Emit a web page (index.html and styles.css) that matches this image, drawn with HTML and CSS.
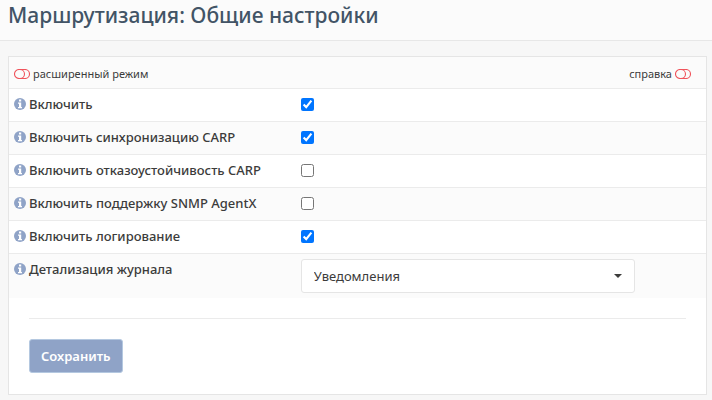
FILE: index.html
```html
<!DOCTYPE html>
<html lang="ru">
<head>
<meta charset="utf-8">
<meta name="viewport" content="width=device-width, initial-scale=1">
<title>Маршрутизация: Общие настройки</title>
<link rel="stylesheet" href="styles.css">
</head>
<body>
<svg class="defs" aria-hidden="true">
  <symbol id="info" viewBox="0 0 12 12">
    <circle cx="6" cy="6" r="6" fill="#8fa3c7"/>
    <path fill="#fff" d="M5 1.5h2.2v2H5zM4 4.5h3.2V9H8v1.3H4V9h1V5.8H4z"/>
  </symbol>
  <symbol id="toggle" viewBox="0 0 16 10">
    <rect x=".5" y=".5" width="15" height="9" rx="4.5" fill="none" stroke="#f0545c" stroke-width="1.1"/>
    <path d="M5 .5h1a4.5 4.5 0 0 1 0 9H5" fill="none" stroke="#f0545c" stroke-width="1.1"/>
  </symbol>
</svg>
<header class="page-head"><h1>Маршрутизация: Общие настройки</h1></header>
<main class="content">
  <form class="panel">
    <table class="settings">
      <thead>
        <tr>
          <td><a class="mode" href="#"><svg class="toggle"><use href="#toggle"/></svg>расширенный режим</a></td>
          <td class="help"><a class="mode" href="#">справка<svg class="toggle"><use href="#toggle"/></svg></a></td>
        </tr>
      </thead>
      <tbody>
        <tr>
          <th scope="row"><label class="name" for="enabled"><svg class="info"><use href="#info"/></svg>Включить</label></th>
          <td><input type="checkbox" id="enabled" checked></td>
        </tr>
        <tr>
          <th scope="row"><label class="name" for="carp"><svg class="info"><use href="#info"/></svg>Включить синхронизацию CARP</label></th>
          <td><input type="checkbox" id="carp" checked></td>
        </tr>
        <tr>
          <th scope="row"><label class="name" for="failover"><svg class="info"><use href="#info"/></svg>Включить отказоустойчивость CARP</label></th>
          <td><input type="checkbox" id="failover"></td>
        </tr>
        <tr>
          <th scope="row"><label class="name" for="snmp"><svg class="info"><use href="#info"/></svg>Включить поддержку SNMP AgentX</label></th>
          <td><input type="checkbox" id="snmp"></td>
        </tr>
        <tr>
          <th scope="row"><label class="name" for="log"><svg class="info"><use href="#info"/></svg>Включить логирование</label></th>
          <td><input type="checkbox" id="log" checked></td>
        </tr>
        <tr>
          <th scope="row"><label class="name" for="level"><svg class="info"><use href="#info"/></svg>Детализация журнала</label></th>
          <td>
            <div class="picker">
              <select id="level"><option>Уведомления</option></select>
              <svg class="caret" viewBox="0 0 8 4" aria-hidden="true"><path d="M0 0h8L4 4z" fill="#3c3c3b"/></svg>
            </div>
          </td>
        </tr>
      </tbody>
    </table>
    <div class="actions"><button type="button">Сохранить</button></div>
  </form>
</main>
</body>
</html>
```
FILE: styles.css
```css
* { box-sizing: border-box; }
body {
  margin: 0;
  background: #f7f7f7;
  color: #3c3c3b;
  font: 13px/20px "Noto Sans", sans-serif;
}
.defs { position: absolute; width: 0; height: 0; }
.page-head {
  padding: 0 8px 10px;
  background: #fbfbfb;
  border-bottom: 1px solid #e7e7e7;
}
h1 {
  margin: 0;
  color: #425466;
  font-size: 21px;
  font-weight: 500;
  line-height: 30px;
}
.content { padding: 15px 5px 5px 8px; }
.panel {
  background: #fff;
  border: 1px solid #e5e5e5;
}
.settings {
  width: 100%;
  border-collapse: separate;
  border-spacing: 0;
  table-layout: fixed;
}
.settings th, .settings td {
  padding: 5px;
  text-align: left;
  vertical-align: top;
  border-top: 1px solid #ebebeb;
}
.settings tbody td { padding-left: 6px; }
.settings thead td {
  width: 59%;
  padding-top: 7px;
  padding-bottom: 4px;
  border-top: 0;
}
.settings thead td:first-child { width: 41%; }
.settings tr:nth-child(even), .settings thead tr, .settings tbody tr:last-child { background: #fbfbfb; }
.settings th { height: 33px; }
.settings .help { padding-right: 15px; }
.help .mode { justify-content: flex-end; }
.mode {
  display: flex;
  align-items: center;
  gap: 3px;
  color: inherit;
  font-size: 11px;
  text-decoration: none;
}
.toggle { width: 16px; height: 10px; }
.name {
  display: flex;
  align-items: center;
  gap: 3px;
  font-weight: 500;
  white-space: nowrap;
}
.info { width: 12px; height: 12px; }
input[type="checkbox"] {
  display: block;
  width: 13px;
  height: 13px;
  margin: 4px 0 0;
}
.picker {
  position: relative;
  width: 334px;
  max-width: 100%;
}
select {
  display: block;
  width: 100%;
  height: 34px;
  padding: 0 12px;
  appearance: none;
  background: #fff;
  border: 1px solid #e5e5e5;
  border-radius: 3px;
  color: inherit;
  font: inherit;
}
.caret {
  position: absolute;
  top: 15px;
  right: 13px;
  width: 8px;
  height: 4px;
  pointer-events: none;
}
.actions {
  margin: 20px 20px 0;
  padding: 20px 0 21px;
  border-top: 1px solid #ebebeb;
}
button {
  display: block;
  height: 34px;
  padding: 0 11px;
  background: #8fa3c7;
  border: 1px solid #b4c8e0;
  border-radius: 3px;
  color: #fff;
  font: inherit;
  font-weight: 600;
}
```
